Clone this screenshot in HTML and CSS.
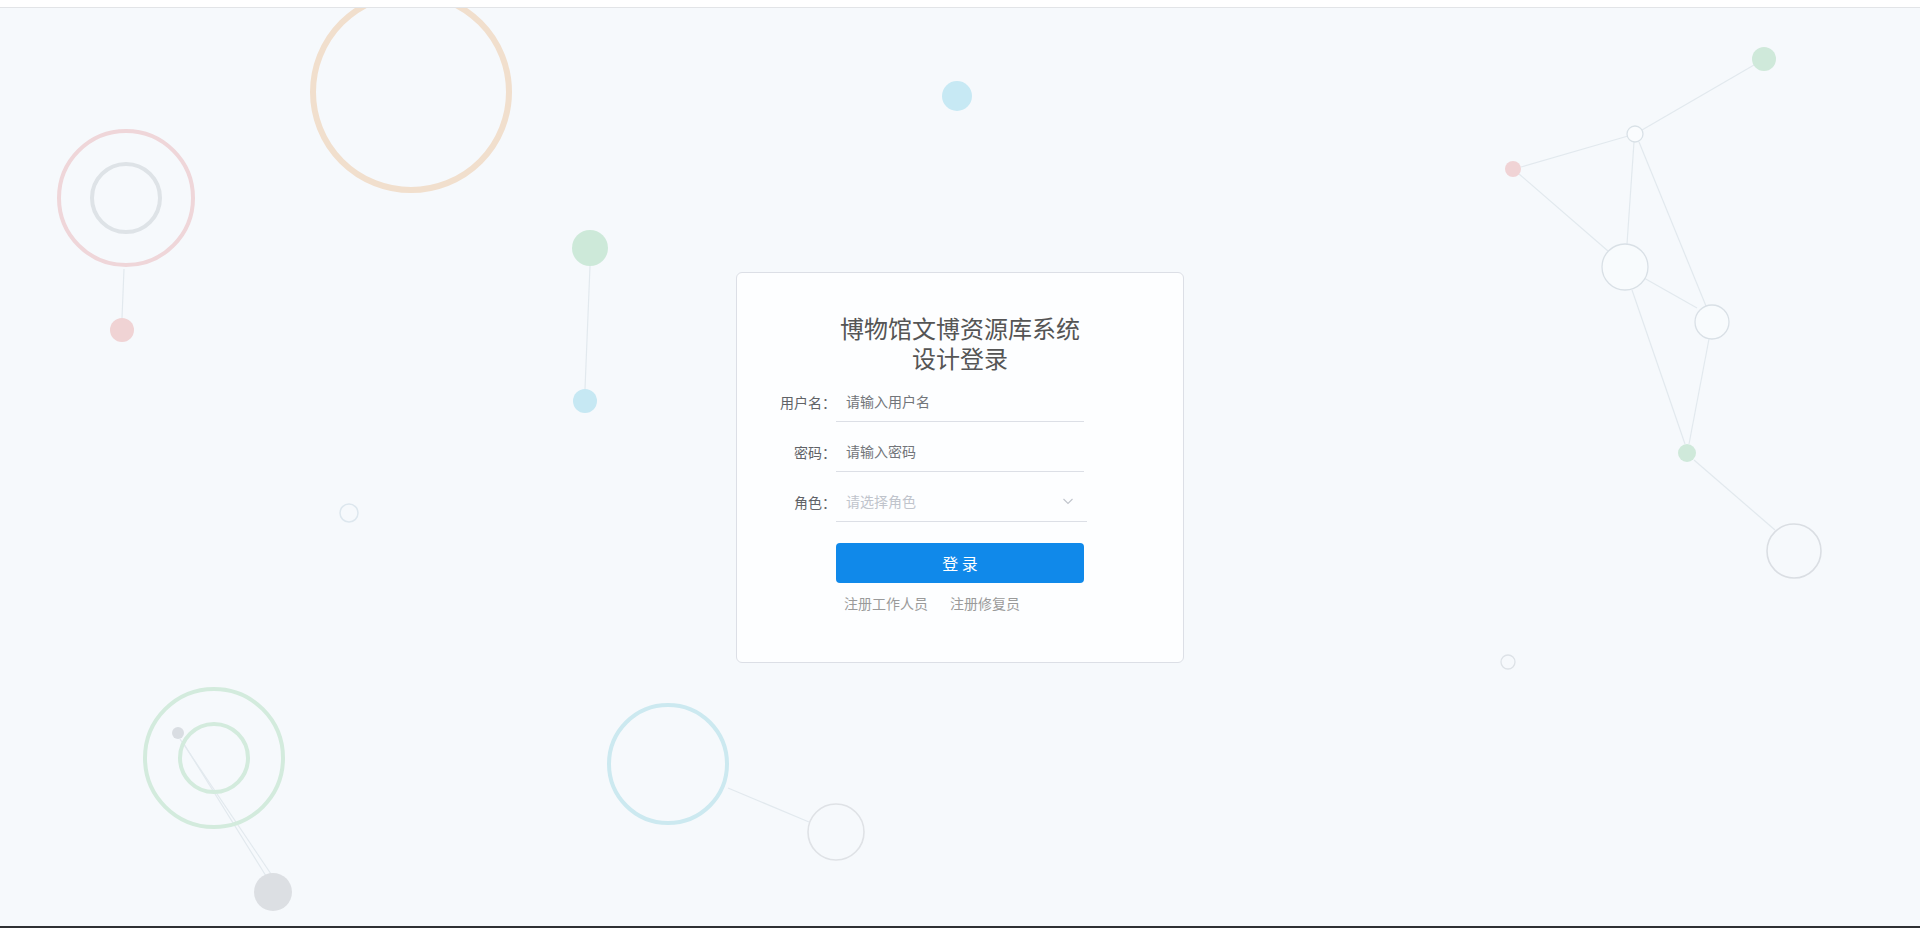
FILE: index.html
```html
<!DOCTYPE html>
<html lang="zh-CN">
<head>
<meta charset="utf-8">
<title>博物馆文博资源库系统设计登录</title>
<link rel="stylesheet" href="styles.css">
</head>
<body>
<div class="page">
  <svg class="bg-art" viewBox="0 0 1920 928" preserveAspectRatio="none" aria-hidden="true">
    <g class="links-lines" fill="none" stroke="#e2e9ee" stroke-width="1.2">
      <line x1="124" y1="269" x2="122" y2="318"/>
      <line x1="590" y1="266" x2="585" y2="389"/>
      <line x1="184" y1="744" x2="266" y2="876"/>
      <line x1="180" y1="739" x2="271" y2="874"/>
      <line x1="728" y1="788" x2="809" y2="822"/>
      <line x1="1754" y1="65" x2="1642" y2="130"/>
      <line x1="1521" y1="167" x2="1628" y2="136"/>
      <line x1="1519" y1="174" x2="1608" y2="251"/>
      <line x1="1634" y1="142" x2="1627" y2="244"/>
      <line x1="1639" y1="142" x2="1706" y2="306"/>
      <line x1="1644" y1="278" x2="1697" y2="308"/>
      <line x1="1632" y1="290" x2="1685" y2="444"/>
      <line x1="1709" y1="339" x2="1689" y2="444"/>
      <line x1="1694" y1="460" x2="1775" y2="530"/>
    </g>
    <circle cx="411" cy="92" r="98" fill="none" stroke="#f1dfcd" stroke-width="6"/>
    <circle cx="126" cy="198" r="67" fill="none" stroke="#efd6d9" stroke-width="4"/>
    <circle cx="126" cy="198" r="34" fill="none" stroke="#dee3e7" stroke-width="4"/>
    <circle cx="122" cy="330" r="12" fill="#f0d3d4"/>
    <circle cx="590" cy="248" r="18" fill="#cde9d9"/>
    <circle cx="585" cy="401" r="12" fill="#c6e8f3"/>
    <circle cx="349" cy="513" r="9" fill="none" stroke="#dde7ee" stroke-width="1.5"/>
    <circle cx="957" cy="96" r="15" fill="#c7e9f4"/>
    <circle cx="214" cy="758" r="69" fill="none" stroke="#d3ebdd" stroke-width="4"/>
    <circle cx="214" cy="758" r="34" fill="none" stroke="#d3ebdd" stroke-width="4"/>
    <circle cx="178" cy="733" r="6" fill="#d9dde2"/>
    <circle cx="273" cy="892" r="19" fill="#dcdfe3"/>
    <circle cx="668" cy="764" r="59" fill="none" stroke="#cce9f0" stroke-width="4"/>
    <circle cx="836" cy="832" r="28" fill="none" stroke="#dfe2e6" stroke-width="1.6"/>
    <circle cx="1764" cy="59" r="12" fill="#cfe9da"/>
    <circle cx="1635" cy="134" r="8" fill="#fafcfe" stroke="#d9e1e7" stroke-width="1.3"/>
    <circle cx="1513" cy="169" r="8" fill="#f0d3d5"/>
    <circle cx="1625" cy="267" r="23" fill="#f8fbfd" stroke="#d9e0e6" stroke-width="1.3"/>
    <circle cx="1712" cy="322" r="17" fill="#f8fbfd" stroke="#d9e0e6" stroke-width="1.3"/>
    <circle cx="1687" cy="453" r="9" fill="#cfe9da"/>
    <circle cx="1794" cy="551" r="27" fill="none" stroke="#dadee3" stroke-width="1.6"/>
    <circle cx="1508" cy="662" r="7" fill="none" stroke="#dde2e7" stroke-width="1.3"/>
  </svg>

  <header class="topbar"></header>

  <main class="stage">
    <section class="card">
      <h1 class="title"><span class="title-line">博物馆文博资源库系统</span><span class="title-line">设计登录</span></h1>
      <form class="form">
        <div class="form-row">
          <label class="label">用户名：</label>
          <input class="input" type="text" placeholder="请输入用户名">
        </div>
        <div class="form-row">
          <label class="label">密码：</label>
          <input class="input" type="password" placeholder="请输入密码">
        </div>
        <div class="form-row">
          <label class="label">角色：</label>
          <div class="select">
            <span class="select-placeholder">请选择角色</span>
            <svg class="chevron" viewBox="0 0 14 14" width="14" height="14"><path d="M2.5 5 L7 9.5 L11.5 5" fill="none" stroke="#c0c4cc" stroke-width="1.1"/></svg>
          </div>
        </div>
        <div class="btn-row">
          <button type="button" class="btn">登 录</button>
        </div>
        <div class="extra-links">
          <a class="link">注册工作人员</a>
          <a class="link">注册修复员</a>
        </div>
      </form>
    </section>
  </main>

  <div class="bottombar"></div>
</div>
</body>
</html>
```

FILE: styles.css
```css
* { box-sizing: border-box; }
html, body { margin: 0; height: 100%; }
body {
  font-family: "Noto Sans CJK SC", "Noto Sans", sans-serif;
  background: #f6f9fc;
  overflow: hidden;
}
.page {
  position: relative;
  height: 100vh;
  display: flex;
  flex-direction: column;
}
.bg-art {
  position: absolute;
  top: 0;
  left: 0;
  width: 100%;
  height: 100%;
}
.topbar {
  position: relative;
  z-index: 1;
  flex: none;
  height: 8px;
  background: #ffffff;
  border-bottom: 1px solid #e2e4e7;
}
.stage {
  position: relative;
  z-index: 1;
  flex: 1;
  display: flex;
  align-items: center;
  justify-content: center;
}
.bottombar {
  position: relative;
  z-index: 1;
  flex: none;
  height: 2px;
  background: #2f3134;
}
.card {
  width: 448px;
  background: #fdfeff;
  border: 1px solid #dcdfe6;
  border-radius: 6px;
  padding: 40px 0 49px;
}
.title {
  margin: 0 0 9px;
  text-align: center;
  font-size: 24px;
  font-weight: 400;
  color: #555555;
}
.title-line {
  display: block;
  height: 30px;
  line-height: 30px;
}
.form {
  display: flex;
  flex-direction: column;
  gap: 10px;
  margin: 0;
}
.form-row {
  display: flex;
  align-items: center;
  height: 40px;
}
.label {
  width: 99px;
  text-align: right;
  font-size: 14px;
  color: #606266;
  line-height: 40px;
}
.input {
  width: 248px;
  height: 40px;
  border: none;
  border-bottom: 1px solid #dcdfe6;
  background: transparent;
  padding: 0 10px;
  font-family: inherit;
  font-size: 14px;
  color: #606266;
  outline: none;
}
.input::placeholder { color: #72757a; }
.select {
  width: 251px;
  height: 40px;
  display: flex;
  align-items: center;
  justify-content: space-between;
  padding: 0 12px 0 10px;
  border-bottom: 1px solid #dcdfe6;
}
.select-placeholder {
  font-size: 14px;
  color: #c0c4cc;
}
.chevron { display: block; }
.btn-row {
  margin-top: 11px;
  padding-left: 99px;
}
.btn {
  width: 248px;
  height: 40px;
  border: none;
  border-radius: 4px;
  background: #1089ea;
  color: #ffffff;
  font-family: inherit;
  font-size: 16px;
  cursor: pointer;
}
.extra-links {
  display: flex;
  gap: 22px;
  padding-left: 107px;
  line-height: 20px;
}
.link {
  font-size: 14px;
  color: #9a9a9a;
  cursor: pointer;
}
```
